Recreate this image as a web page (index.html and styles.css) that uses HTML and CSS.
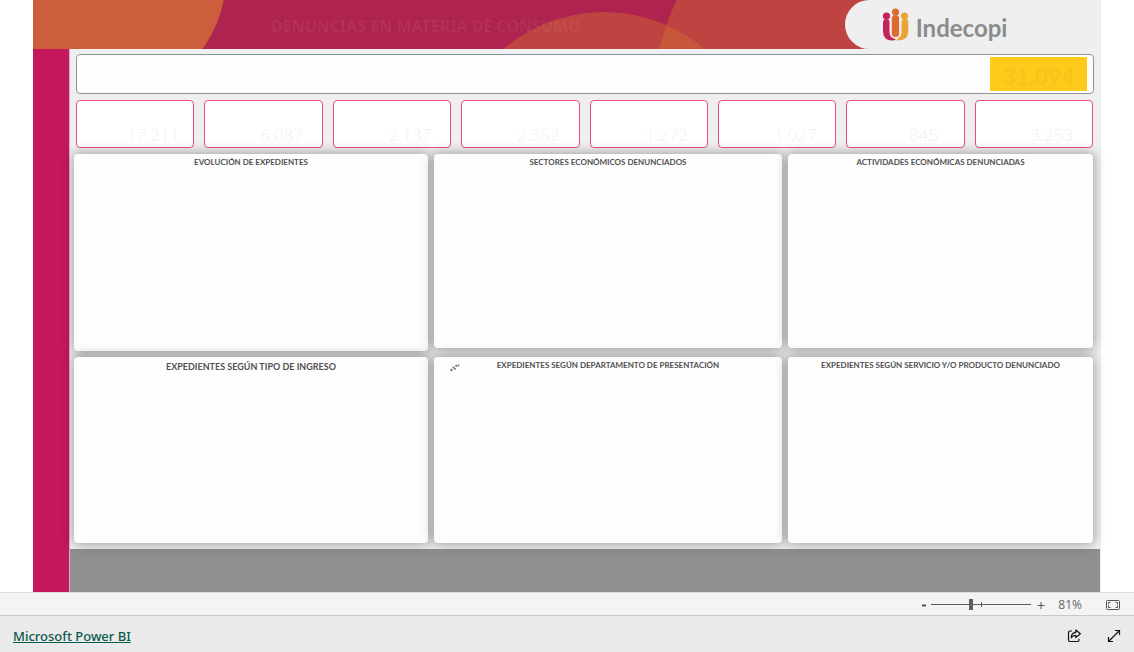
FILE: index.html
```html
<!DOCTYPE html>
<html lang="es">
<head>
<meta charset="utf-8">
<meta name="viewport" content="width=device-width, initial-scale=1">
<title>Denuncias en materia de consumo</title>
<link rel="stylesheet" href="styles.css">
</head>
<body>
<main class="report">
  <header class="banner">
    <svg class="banner-art" viewBox="0 0 1068 49" preserveAspectRatio="xMidYMid slice" aria-hidden="true">
      <circle cx="68" cy="-24" r="125" fill="#cd5e3d"/>
      <circle cx="571" cy="167" r="155" fill="#d87430" fill-opacity=".4"/>
      <circle cx="838" cy="97" r="217" fill="#d87430" fill-opacity=".4"/>
    </svg>
    <h1 class="banner-title">DENUNCIAS EN MATERIA DE CONSUMO</h1>
    <div class="brand">
      <svg class="brand-mark" viewBox="0 0 27 34" aria-hidden="true">
        <circle cx="4.5" cy="8" r="3.6" fill="#c4225a"/>
        <circle cx="13.500" cy="4" r="3.6" fill="#dc6b2f"/>
        <circle cx="22.500" cy="8" r="3.6" fill="#eaa432"/>
        <path d="M1 14.500Q1 11 4.200 11Q7.500 11 7.500 14.500V24Q7.500 30 14 31.200Q12.500 32.500 10 32.500Q1 32.500 1 23Z" fill="#c4225a"/>
        <path d="M26.300 14.500Q26.300 11 23 11Q19.500 11 19.500 14.500V24Q19.500 29 15.500 30.500Q15.500 31.500 14.500 32.300Q26.300 33.500 26.300 23Z" fill="#eaa432"/>
        <rect x="9.800" y="7" width="7.300" height="22" rx="3.500" fill="#dc6b2f"/>
      </svg>
      <span class="brand-name">Indecopi</span>
    </div>
  </header>
  <div class="body">
    <div class="rail"></div>
    <div class="content">
      <div class="total"><span class="total-value">31.094</span></div>
      <div class="cards">
        <div class="card">17.211</div>
        <div class="card">6.087</div>
        <div class="card">2.137</div>
        <div class="card">2.352</div>
        <div class="card">1.272</div>
        <div class="card">1.027</div>
        <div class="card">845</div>
        <div class="card">3.253</div>
      </div>
      <div class="panels">
        <section class="panel"><h2>EVOLUCIÓN DE EXPEDIENTES</h2></section>
        <section class="panel short"><h2>SECTORES ECONÓMICOS DENUNCIADOS</h2></section>
        <section class="panel short"><h2>ACTIVIDADES ECONÓMICAS DENUNCIADAS</h2></section>
        <section class="panel large"><h2>EXPEDIENTES SEGÚN TIPO DE INGRESO</h2></section>
        <section class="panel">
          <svg class="loading" viewBox="0 0 10 8" aria-hidden="true"><g fill="#777"><circle cx="1.500" cy="6" r="1.200"/><circle cx="3.500" cy="3.500" r="1.100"/><circle cx="5" cy="4.800" r="1"/><circle cx="6.300" cy="1.800" r="1.100"/><circle cx="8.500" cy="1.500" r="1"/></g></svg>
          <h2>EXPEDIENTES SEGÚN DEPARTAMENTO DE PRESENTACIÓN</h2>
        </section>
        <section class="panel"><h2>EXPEDIENTES SEGÚN SERVICIO Y/O PRODUCTO DENUNCIADO</h2></section>
      </div>
      <div class="base"></div>
    </div>
  </div>
</main>
<div class="zoombar">
  <button class="step" type="button" aria-label="Alejar"><svg viewBox="0 0 8 8"><path d="M2 4.500h4" stroke="#555" stroke-width="2"/></svg></button>
  <div class="slider"><input class="range" type="range" min="0" max="100" value="39" aria-label="Zoom"></div>
  <button class="step" type="button" aria-label="Acercar"><svg viewBox="0 0 8 8"><path d="M.500 4.500h7M4 1v7" stroke="#555"/></svg></button>
  <span class="percent">81%</span>
  <button class="fit" type="button" aria-label="Ajustar a la página">
    <svg viewBox="0 0 14 10" fill="none" stroke="#555"><rect x=".500" y=".500" width="13" height="9" rx="1"/><path d="M4.500 2.500h-2v2M9.500 2.500h2v2M4.500 7.500h-2v-2M9.500 7.500h2v-2"/></svg>
  </button>
</div>
<footer class="footer">
  <a class="product" href="#">Microsoft Power BI</a>
  <button class="tool" type="button" aria-label="Compartir">
    <svg viewBox="0 0 14 14" fill="none" stroke="#111" stroke-width="1.200" stroke-linejoin="round"><path d="M5 2H3Q1.500 2 1.500 3.500v7.500Q1.500 12.500 3 12.500h7.500Q12 12.500 12 11V9.800"/><path d="M8.800 1L13.300 4.800L8.800 8.600V6.400Q5.800 6.200 4.200 8.800Q4.400 3.600 8.800 3.300Z"/></svg>
  </button>
  <button class="tool" type="button" aria-label="Pantalla completa">
    <svg viewBox="0 0 14 14" fill="none" stroke="#111" stroke-width="1.200"><path d="M1.500 12.500L12.500 1.500M8 1.500h4.500V6M1.500 8v4.500H6"/></svg>
  </button>
</footer>
</body>
</html>
```
FILE: styles.css
```css
* { box-sizing: border-box; }

body {
  margin: 0;
  height: 100vh;
  display: flex;
  flex-direction: column;
  background: #fff;
  font-family: "Open Sans", "Noto Sans", sans-serif;
}

h1, h2 { margin: 0; }

button {
  display: flex;
  padding: 0;
  border: 0;
  background: none;
}

.report {
  flex: 1;
  min-height: 0;
  margin: 0 33px;
  display: flex;
  flex-direction: column;
}

.banner {
  position: relative;
  height: 49px;
  display: flex;
  align-items: stretch;
  justify-content: space-between;
  background: #ae244e;
}

.banner-art {
  position: absolute;
  inset: 0;
  width: 100%;
  height: 100%;
}

.banner-title {
  position: relative;
  padding-left: 238px;
  font-family: "Noto Sans", sans-serif;
  font-size: 16px;
  line-height: 52px;
  font-weight: 700;
  color: rgba(255, 255, 255, .06);
}

.brand {
  position: relative;
  width: 24%;
  padding-left: 37px;
  display: flex;
  align-items: center;
  gap: 7px;
  background: #efeff1;
  border-radius: 25px 0 0 25px;
}

.brand-mark { width: 27px; height: 34px; }

.brand-name {
  padding-top: 6px;
  font-size: 24px;
  line-height: 32px;
  font-weight: 700;
  font-family: Lato, sans-serif;
  color: #8b8c8a;
}

.body {
  flex: 1;
  min-height: 0;
  display: flex;
}

.rail { width: 36px; background: #c3185b; }

.content {
  flex: 1;
  display: flex;
  flex-direction: column;
  background: #efeff1;
  border-left: 1px solid #e5a9c2;
}

.total {
  height: 40px;
  margin: 5px 7px 0 6px;
  padding: 2px 6px;
  display: flex;
  justify-content: flex-end;
  background: #fefefe;
  border: 1px solid #929295;
  border-radius: 4px;
}

.total-value {
  width: 97px;
  height: 34px;
  line-height: 38px;
  text-align: center;
  font-family: Lato, sans-serif;
  font-size: 23px;
  font-weight: 700;
  color: #f7c41c;
  background: #ffcb1a;
}

.cards {
  margin: 6px 8px 0 6px;
  display: grid;
  grid-template-columns: repeat(8, 1fr);
  gap: 10px;
}

.card {
  height: 48px;
  padding: 22px 0 0 36px;
  text-align: center;
  font-size: 17px;
  line-height: 24px;
  font-weight: 300;
  color: #f1f1f2;
  background: #fff;
  border: 1px solid #ea4c86;
  border-radius: 4px;
}

.panels {
  flex: 1;
  margin: 6px 8px 0 4px;
  display: grid;
  grid-template-columns: 354fr 348fr 305fr;
  grid-template-rows: 197fr 186fr;
  gap: 6px;
}

.panel {
  position: relative;
  padding-top: 2px;
  background: #fdfdfd;
  border-radius: 4px;
  box-shadow: 0 0 12px 1px rgba(0, 0, 0, .35);
}

.short { margin-bottom: 3px; }

.panel h2 {
  text-align: center;
  font-family: Lato, sans-serif;
  font-size: 8px;
  line-height: 12px;
  font-weight: 700;
  color: #505050;
}

.panel.large h2 { font-size: 9px; line-height: 16px; }

.loading {
  position: absolute;
  top: 7px;
  left: 16px;
  width: 10px;
  height: 8px;
}

.base { height: 43px; margin: 6px 1px 0 0; background: #8f8f8f; }

.zoombar {
  height: 23px;
  padding: 1px 14px 0 0;
  display: flex;
  align-items: center;
  justify-content: flex-end;
  background: #f4f4f4;
  border-top: 1px solid #dcdcdc;
}

.step svg { width: 8px; height: 8px; }

.slider {
  width: 100px;
  height: 12px;
  margin: 0 6px 0 3px;
  display: flex;
  align-items: center;
  background:
    linear-gradient(#605e5c, #605e5c) 50px 50% / 1px 5px no-repeat,
    linear-gradient(#605e5c, #605e5c) 0 50% / 100% 1px no-repeat;
}

.range {
  width: 100%;
  height: 12px;
  margin: 0;
  appearance: none;
  background: transparent;
}

.range::-webkit-slider-thumb {
  appearance: none;
  width: 4px;
  height: 11px;
  background: #605e5c;
}

.percent {
  margin: 0 24px 0 13px;
  font-size: 12px;
  line-height: 20px;
  color: #666;
}

.fit svg { width: 14px; height: 10px; }

.footer {
  height: 37px;
  padding: 4px 13px 0;
  display: flex;
  align-items: center;
  gap: 26px;
  background: #eaeaea;
  border-top: 1px solid #c8c8c8;
}

.product {
  margin-right: auto;
  font-family: "Noto Sans", sans-serif;
  font-size: 13px;
  line-height: 20px;
  font-weight: 500;
  color: #0b5a4e;
}

.tool svg { width: 14px; height: 14px; }
```
